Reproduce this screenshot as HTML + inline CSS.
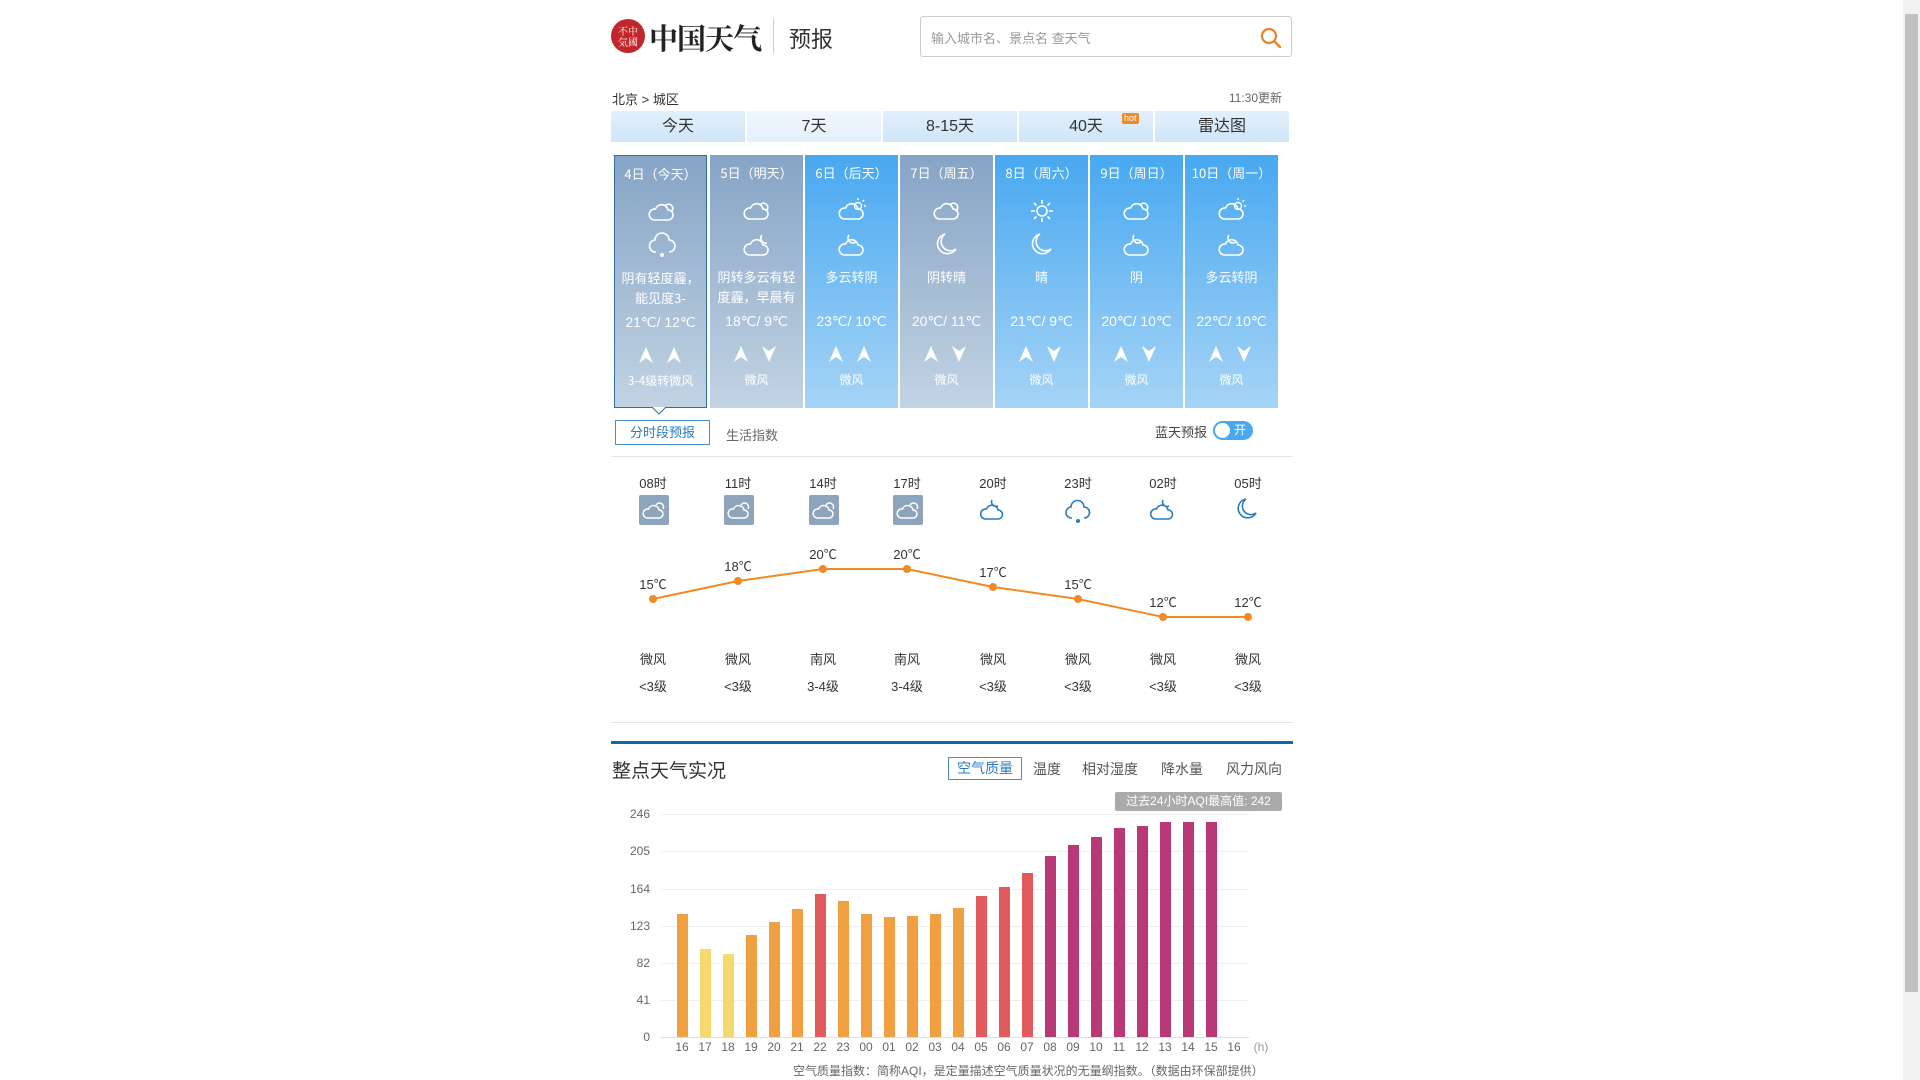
<!DOCTYPE html>
<html><head><meta charset="utf-8"><style>
*{margin:0;padding:0;box-sizing:border-box}
body{width:1920px;height:1080px;background:#fff;font-family:"Liberation Sans","Noto Sans CJK SC",sans-serif;color:#333;position:relative;overflow:hidden}
.a{position:absolute}
.tab{position:absolute;top:111px;height:31px;width:134px;background:linear-gradient(#e3f0fc,#cfe5f8);text-align:center;line-height:31px;font-size:16px;color:#333}
.card{position:absolute;top:155px;height:253px;width:93px;color:#fff;text-align:center;font-size:13px;font-family:"Noto Sans CJK SC","Liberation Sans",sans-serif}
.g{background:linear-gradient(#86a4c6,#c2d3e3)}
.b{background:linear-gradient(#48a8f0,#a6d4f6)}
.card .d{position:absolute;top:8px;width:100%;font-size:13px}
.card svg{position:absolute;left:32px}
.card .w{position:absolute;top:112px;width:100%;line-height:20px;height:40px;overflow:hidden;padding:0 5px}
.card .t{position:absolute;top:158px;width:100%;font-size:14px;font-family:"Liberation Sans",sans-serif}
.card svg.u{left:24px;top:191px}
.card svg.v{left:52px;top:191px}
.card .f{position:absolute;top:216px;width:100%;font-size:12px}
.hr{position:absolute;width:60px;margin-left:-30px;text-align:center;font-size:13px}
.yl{position:absolute;right:1270px;font-size:12px;color:#666;text-align:right}
.grid{position:absolute;left:661px;width:588px;height:1px;background:#eee}
</style></head><body>
<div class="a" style="left:611px;top:19px;width:34px;height:34px;border-radius:50%;background:#c0262a;color:#fff;font-size:10px;line-height:11px;text-align:center;padding-top:6px;font-family:'Noto Serif CJK SC',serif">不中<br>気國</div>
<div class="a" style="left:649px;top:17px;font-size:29px;font-weight:bold;font-family:'Noto Serif CJK SC',serif;color:#222;letter-spacing:-1px">中国天气</div>
<div class="a" style="left:773px;top:18px;width:1px;height:36px;background:#ccc"></div>
<div class="a" style="left:789px;top:22px;font-size:22px;color:#333">预报</div>
<div class="a" style="left:920px;top:16px;width:372px;height:41px;border:1px solid #ccc;border-radius:3px"></div>
<div class="a" style="left:931px;top:28px;font-size:13px;color:#999">输入城市名、景点名 查天气</div>
<svg class="a" style="left:1259px;top:26px" width="24" height="24" viewBox="0 0 24 24"><circle cx="10" cy="10" r="7" fill="none" stroke="#e8822a" stroke-width="2.2"/><path d="M15 15l6 6" stroke="#e8822a" stroke-width="2.4" stroke-linecap="round"/></svg>
<div class="a" style="left:612px;top:89px;font-size:13px">北京 &gt; 城区</div>
<div class="a" style="left:1200px;top:89px;width:82px;text-align:right;font-size:12px;color:#666">11:30更新</div>
<div class="tab" style="left:611px">今天</div>
<div class="tab" style="left:747px;background:linear-gradient(#f0f7fd,#e3f0fb)">7天</div>
<div class="tab" style="left:883px">8-15天</div>
<div class="tab" style="left:1019px">40天</div>
<div class="a" style="left:1122px;top:113px;background:#f08a24;color:#fff;font-size:9px;padding:0 2px;line-height:11px;border-radius:2px">hot</div>
<div class="tab" style="left:1155px">雷达图</div>

<div class="card g" style="left:614px;border:1px solid #2f6fa6"><div class="d">4日（今天）</div>
<svg style="top:44px" width="30" height="24" viewBox="0 0 30 24"><path d="M7 20h14a5 5 0 0 0 0-10 6.5 6.5 0 0 0-12.5-1A5.5 5.5 0 0 0 7 20z" fill="none" stroke="#fff" stroke-width="1.6"/><path d="M18 6a4 4 0 0 1 7 5" fill="none" stroke="#fff" stroke-width="1.6"/></svg>
<svg style="top:76px" width="30" height="28" viewBox="0 0 30 28"><path d="M9 20a6 6 0 0 1-1-12 7 7 0 0 1 14 0 6 6 0 0 1 0 12" fill="none" stroke="#fff" stroke-width="1.6"/><circle cx="15" cy="23" r="2" fill="#fff"/></svg>
<div class="w">阴有轻度霾，能见度3-</div><div class="t">21℃/ 12℃</div>
<svg class="u" width="14" height="16" viewBox="0 0 14 16"><path d="M7 0L14 16 7 11 0 16z" fill="#fff"/></svg><svg class="v" width="14" height="16" viewBox="0 0 14 16"><path d="M7 0L14 16 7 11 0 16z" fill="#fff"/></svg>
<div class="f">3-4级转微风</div></div>
<div class="card g" style="left:710px"><div class="d">5日（明天）</div>
<svg style="top:44px" width="30" height="24" viewBox="0 0 30 24"><path d="M7 20h14a5 5 0 0 0 0-10 6.5 6.5 0 0 0-12.5-1A5.5 5.5 0 0 0 7 20z" fill="none" stroke="#fff" stroke-width="1.6"/><path d="M18 6a4 4 0 0 1 7 5" fill="none" stroke="#fff" stroke-width="1.6"/></svg>
<svg style="top:76px" width="30" height="28" viewBox="0 0 30 28"><path d="M7 24h14a5 5 0 0 0 0-10 6.5 6.5 0 0 0-12.5-1A5.5 5.5 0 0 0 7 24z" fill="none" stroke="#fff" stroke-width="1.6"/><path d="M20 4a5 5 0 0 0 5 8" fill="none" stroke="#fff" stroke-width="1.6"/></svg>
<div class="w">阴转多云有轻度霾，早晨有</div><div class="t">18℃/ 9℃</div>
<svg class="u" width="14" height="16" viewBox="0 0 14 16"><path d="M7 0L14 16 7 11 0 16z" fill="#fff"/></svg><svg class="v" width="14" height="16" viewBox="0 0 14 16"><path d="M7 16L14 0 7 5 0 0z" fill="#fff"/></svg>
<div class="f">微风</div></div>
<div class="card b" style="left:805px"><div class="d">6日（后天）</div>
<svg style="top:42px" width="30" height="26" viewBox="0 0 30 26"><path d="M7 22h14a5 5 0 0 0 0-10 6.5 6.5 0 0 0-12.5-1A5.5 5.5 0 0 0 7 22z" fill="none" stroke="#fff" stroke-width="1.6"/><circle cx="21" cy="9" r="3.5" fill="none" stroke="#fff" stroke-width="1.4"/><path d="M21 1v2M27 3l-1.5 1.5M29 9h-2" stroke="#fff" stroke-width="1.4"/></svg>
<svg style="top:76px" width="30" height="28" viewBox="0 0 30 28"><path d="M7 24h14a5 5 0 0 0 0-10 6.5 6.5 0 0 0-12.5-1A5.5 5.5 0 0 0 7 24z" fill="none" stroke="#fff" stroke-width="1.6"/><path d="M12 4a5 5 0 0 0 7 7" fill="none" stroke="#fff" stroke-width="1.6"/></svg>
<div class="w">多云转阴</div><div class="t">23℃/ 10℃</div>
<svg class="u" width="14" height="16" viewBox="0 0 14 16"><path d="M7 0L14 16 7 11 0 16z" fill="#fff"/></svg><svg class="v" width="14" height="16" viewBox="0 0 14 16"><path d="M7 0L14 16 7 11 0 16z" fill="#fff"/></svg>
<div class="f">微风</div></div>
<div class="card g" style="left:900px"><div class="d">7日（周五）</div>
<svg style="top:44px" width="30" height="24" viewBox="0 0 30 24"><path d="M7 20h14a5 5 0 0 0 0-10 6.5 6.5 0 0 0-12.5-1A5.5 5.5 0 0 0 7 20z" fill="none" stroke="#fff" stroke-width="1.6"/><path d="M18 6a4 4 0 0 1 7 5" fill="none" stroke="#fff" stroke-width="1.6"/></svg>
<svg style="top:76px" width="30" height="28" viewBox="0 0 30 28"><path d="M13 3a10 10 0 1 0 11 15A9 9 0 0 1 13 3z" fill="none" stroke="#fff" stroke-width="1.6"/></svg>
<div class="w">阴转晴</div><div class="t">20℃/ 11℃</div>
<svg class="u" width="14" height="16" viewBox="0 0 14 16"><path d="M7 0L14 16 7 11 0 16z" fill="#fff"/></svg><svg class="v" width="14" height="16" viewBox="0 0 14 16"><path d="M7 16L14 0 7 5 0 0z" fill="#fff"/></svg>
<div class="f">微风</div></div>
<div class="card b" style="left:995px"><div class="d">8日（周六）</div>
<svg style="top:42px" width="30" height="28" viewBox="0 0 30 28"><circle cx="15" cy="14" r="5" fill="none" stroke="#fff" stroke-width="1.6"/><path d="M15 3v4M15 21v4M4 14h4M22 14h4M7 6l2.5 2.5M23 6l-2.5 2.5M7 22l2.5-2.5M23 22l-2.5-2.5" stroke="#fff" stroke-width="1.6"/></svg>
<svg style="top:76px" width="30" height="28" viewBox="0 0 30 28"><path d="M13 3a10 10 0 1 0 11 15A9 9 0 0 1 13 3z" fill="none" stroke="#fff" stroke-width="1.6"/></svg>
<div class="w">晴</div><div class="t">21℃/ 9℃</div>
<svg class="u" width="14" height="16" viewBox="0 0 14 16"><path d="M7 0L14 16 7 11 0 16z" fill="#fff"/></svg><svg class="v" width="14" height="16" viewBox="0 0 14 16"><path d="M7 16L14 0 7 5 0 0z" fill="#fff"/></svg>
<div class="f">微风</div></div>
<div class="card b" style="left:1090px"><div class="d">9日（周日）</div>
<svg style="top:44px" width="30" height="24" viewBox="0 0 30 24"><path d="M7 20h14a5 5 0 0 0 0-10 6.5 6.5 0 0 0-12.5-1A5.5 5.5 0 0 0 7 20z" fill="none" stroke="#fff" stroke-width="1.6"/><path d="M18 6a4 4 0 0 1 7 5" fill="none" stroke="#fff" stroke-width="1.6"/></svg>
<svg style="top:76px" width="30" height="28" viewBox="0 0 30 28"><path d="M7 24h14a5 5 0 0 0 0-10 6.5 6.5 0 0 0-12.5-1A5.5 5.5 0 0 0 7 24z" fill="none" stroke="#fff" stroke-width="1.6"/><path d="M12 4a5 5 0 0 0 7 7" fill="none" stroke="#fff" stroke-width="1.6"/></svg>
<div class="w">阴</div><div class="t">20℃/ 10℃</div>
<svg class="u" width="14" height="16" viewBox="0 0 14 16"><path d="M7 0L14 16 7 11 0 16z" fill="#fff"/></svg><svg class="v" width="14" height="16" viewBox="0 0 14 16"><path d="M7 16L14 0 7 5 0 0z" fill="#fff"/></svg>
<div class="f">微风</div></div>
<div class="card b" style="left:1185px"><div class="d">10日（周一）</div>
<svg style="top:42px" width="30" height="26" viewBox="0 0 30 26"><path d="M7 22h14a5 5 0 0 0 0-10 6.5 6.5 0 0 0-12.5-1A5.5 5.5 0 0 0 7 22z" fill="none" stroke="#fff" stroke-width="1.6"/><circle cx="21" cy="9" r="3.5" fill="none" stroke="#fff" stroke-width="1.4"/><path d="M21 1v2M27 3l-1.5 1.5M29 9h-2" stroke="#fff" stroke-width="1.4"/></svg>
<svg style="top:76px" width="30" height="28" viewBox="0 0 30 28"><path d="M7 24h14a5 5 0 0 0 0-10 6.5 6.5 0 0 0-12.5-1A5.5 5.5 0 0 0 7 24z" fill="none" stroke="#fff" stroke-width="1.6"/><path d="M12 4a5 5 0 0 0 7 7" fill="none" stroke="#fff" stroke-width="1.6"/></svg>
<div class="w">多云转阴</div><div class="t">22℃/ 10℃</div>
<svg class="u" width="14" height="16" viewBox="0 0 14 16"><path d="M7 0L14 16 7 11 0 16z" fill="#fff"/></svg><svg class="v" width="14" height="16" viewBox="0 0 14 16"><path d="M7 16L14 0 7 5 0 0z" fill="#fff"/></svg>
<div class="f">微风</div></div>
<svg class="a" style="left:652px;top:407px" width="14" height="8"><path d="M0 0l7 7 7-7" fill="#fff" stroke="#2f6fa6"/></svg>

<div class="a" style="left:615px;top:420px;width:95px;height:25px;border:1px solid #4a90c8;color:#2a7bc0;font-size:13px;text-align:center;line-height:23px">分时段预报</div>
<div class="a" style="left:726px;top:425px;font-size:13px;color:#666">生活指数</div>
<div class="a" style="left:1155px;top:422px;font-size:13px;color:#444">蓝天预报</div>
<div class="a" style="left:1213px;top:421px;width:40px;height:19px;border-radius:10px;background:#4aa8ee;color:#fff;font-size:12px;line-height:19px;padding-left:21px">开<div class="a" style="left:2px;top:2px;width:15px;height:15px;border-radius:50%;background:#fff"></div></div>
<div class="a" style="left:611px;top:456px;width:682px;height:1px;background:#e5e5e5"></div>

<div class="hr" style="left:653px;top:473px">08时</div><div class="hr" style="left:738px;top:473px">11时</div><div class="hr" style="left:823px;top:473px">14时</div><div class="hr" style="left:907px;top:473px">17时</div><div class="hr" style="left:993px;top:473px">20时</div><div class="hr" style="left:1078px;top:473px">23时</div><div class="hr" style="left:1163px;top:473px">02时</div><div class="hr" style="left:1248px;top:473px">05时</div>
<svg class="a" style="left:0;top:0" width="1920" height="1080">
<g fill="#8ea3bc"><rect x="639" y="495" width="30" height="30" rx="2"/><rect x="724" y="495" width="30" height="30" rx="2"/><rect x="809" y="495" width="30" height="30" rx="2"/><rect x="893" y="495" width="30" height="30" rx="2"/></g>
<g fill="none" stroke="#fff" stroke-width="1.5">
<path d="M647 518h12a4 4 0 0 0 0-8 5.5 5.5 0 0 0-10.5-1A4.5 4.5 0 0 0 647 518zM656 505a3.5 3.5 0 0 1 7 4"/>
<path d="M732 518h12a4 4 0 0 0 0-8 5.5 5.5 0 0 0-10.5-1A4.5 4.5 0 0 0 732 518zM741 505a3.5 3.5 0 0 1 7 4"/>
<path d="M817 518h12a4 4 0 0 0 0-8 5.5 5.5 0 0 0-10.5-1A4.5 4.5 0 0 0 817 518zM826 505a3.5 3.5 0 0 1 7 4"/>
<path d="M901 518h12a4 4 0 0 0 0-8 5.5 5.5 0 0 0-10.5-1A4.5 4.5 0 0 0 901 518zM910 505a3.5 3.5 0 0 1 7 4"/>
</g>
<g fill="none" stroke="#2a7bc0" stroke-width="1.6">
<path d="M985 519h13a4.5 4.5 0 0 0 0-9 6 6 0 0 0-11.5-1A5 5 0 0 0 985 519zM992 500a4.5 4.5 0 0 0 6 6"/>
<path d="M1072 518a5.5 5.5 0 0 1-1-11 6.5 6.5 0 0 1 13 0 5.5 5.5 0 0 1 0 11"/>
<path d="M1155 519h13a4.5 4.5 0 0 0 0-9 6 6 0 0 0-11.5-1A5 5 0 0 0 1155 519zM1163 500a4.5 4.5 0 0 0 6 6"/>
<path d="M1246 499a9.5 9.5 0 1 0 10 14A8.5 8.5 0 0 1 1246 499z"/>
</g>
<circle cx="1078" cy="521" r="2" fill="#2a7bc0"/>
<polyline points="653,599 738,581 823,569 907,569 993,587 1078,599 1163,617 1248,617" fill="none" stroke="#f08a24" stroke-width="2"/>
<g fill="#f08a24"><circle cx="653" cy="599" r="4"/><circle cx="738" cy="581" r="4"/><circle cx="823" cy="569" r="4"/><circle cx="907" cy="569" r="4"/><circle cx="993" cy="587" r="4"/><circle cx="1078" cy="599" r="4"/><circle cx="1163" cy="617" r="4"/><circle cx="1248" cy="617" r="4"/></g>
<g font-size="13" fill="#333" text-anchor="middle" font-family="Liberation Sans, Noto Sans CJK SC, sans-serif">
<text x="653" y="589">15℃</text><text x="738" y="571">18℃</text><text x="823" y="559">20℃</text><text x="907" y="559">20℃</text><text x="993" y="577">17℃</text><text x="1078" y="589">15℃</text><text x="1163" y="607">12℃</text><text x="1248" y="607">12℃</text>
<text x="653" y="664">微风</text><text x="738" y="664">微风</text><text x="823" y="664">南风</text><text x="907" y="664">南风</text><text x="993" y="664">微风</text><text x="1078" y="664">微风</text><text x="1163" y="664">微风</text><text x="1248" y="664">微风</text>
<text x="653" y="691">&lt;3级</text><text x="738" y="691">&lt;3级</text><text x="823" y="691">3-4级</text><text x="907" y="691">3-4级</text><text x="993" y="691">&lt;3级</text><text x="1078" y="691">&lt;3级</text><text x="1163" y="691">&lt;3级</text><text x="1248" y="691">&lt;3级</text>
</g>
</svg>
<div class="a" style="left:611px;top:722px;width:682px;height:1px;background:#e5e5e5"></div>
<div class="a" style="left:611px;top:741px;width:682px;height:3px;background:#0f6aa5"></div>
<div class="a" style="left:612px;top:756px;font-size:19px;color:#333">整点天气实况</div>
<div class="a" style="left:948px;top:757px;width:74px;height:23px;border:1px solid #4a90c8;color:#2a7bc0;font-size:14px;text-align:center;line-height:21px">空气质量</div>
<div class="a" style="left:1033px;top:759px;font-size:14px;color:#555">温度</div>
<div class="a" style="left:1082px;top:759px;font-size:14px;color:#555">相对湿度</div>
<div class="a" style="left:1161px;top:759px;font-size:14px;color:#555">降水量</div>
<div class="a" style="left:1226px;top:759px;font-size:14px;color:#555">风力风向</div>
<div class="a" style="left:1115px;top:792px;width:167px;height:19px;background:#aaa;border-radius:2px;color:#fff;font-size:12px;text-align:center;line-height:19px">过去24小时AQI最高值: 242</div>

<div class="grid" style="top:814px"></div><div class="grid" style="top:851px"></div><div class="grid" style="top:889px"></div><div class="grid" style="top:926px"></div><div class="grid" style="top:963px"></div><div class="grid" style="top:1000px"></div><div class="grid" style="top:1037px;background:#ddd"></div>
<div class="yl" style="top:807px">246</div><div class="yl" style="top:844px">205</div><div class="yl" style="top:882px">164</div><div class="yl" style="top:919px">123</div><div class="yl" style="top:956px">82</div><div class="yl" style="top:993px">41</div><div class="yl" style="top:1030px">0</div>
<svg class="a" style="left:0;top:0" width="1920" height="1080">
<g>
<rect x="677" y="914" width="11" height="123" fill="#f0a040"/>
<rect x="700" y="949" width="11" height="88" fill="#f5d86e"/>
<rect x="723" y="954" width="11" height="83" fill="#f5d86e"/>
<rect x="746" y="935" width="11" height="102" fill="#f0a040"/>
<rect x="769" y="922" width="11" height="115" fill="#f0a040"/>
<rect x="792" y="909" width="11" height="128" fill="#f0a040"/>
<rect x="815" y="894" width="11" height="143" fill="#e05a5e"/>
<rect x="838" y="901" width="11" height="136" fill="#f0a040"/>
<rect x="861" y="914" width="11" height="123" fill="#f0a040"/>
<rect x="884" y="917" width="11" height="120" fill="#f0a040"/>
<rect x="907" y="916" width="11" height="121" fill="#f0a040"/>
<rect x="930" y="914" width="11" height="123" fill="#f0a040"/>
<rect x="953" y="908" width="11" height="129" fill="#f0a040"/>
<rect x="976" y="896" width="11" height="141" fill="#e05a5e"/>
<rect x="999" y="887" width="11" height="150" fill="#e05a5e"/>
<rect x="1022" y="873" width="11" height="164" fill="#e05a5e"/>
<rect x="1045" y="856" width="11" height="181" fill="#b83878"/>
<rect x="1068" y="845" width="11" height="192" fill="#b83878"/>
<rect x="1091" y="837" width="11" height="200" fill="#b83878"/>
<rect x="1114" y="828" width="11" height="209" fill="#b83878"/>
<rect x="1137" y="826" width="11" height="211" fill="#b83878"/>
<rect x="1160" y="822" width="11" height="215" fill="#b83878"/>
<rect x="1183" y="822" width="11" height="215" fill="#b83878"/>
<rect x="1206" y="822" width="11" height="215" fill="#b83878"/>
</g>
<g font-size="12" fill="#666" text-anchor="middle" font-family="Liberation Sans, sans-serif">
<text x="682" y="1051">16</text><text x="705" y="1051">17</text><text x="728" y="1051">18</text><text x="751" y="1051">19</text><text x="774" y="1051">20</text><text x="797" y="1051">21</text><text x="820" y="1051">22</text><text x="843" y="1051">23</text><text x="866" y="1051">00</text><text x="889" y="1051">01</text><text x="912" y="1051">02</text><text x="935" y="1051">03</text><text x="958" y="1051">04</text><text x="981" y="1051">05</text><text x="1004" y="1051">06</text><text x="1027" y="1051">07</text><text x="1050" y="1051">08</text><text x="1073" y="1051">09</text><text x="1096" y="1051">10</text><text x="1119" y="1051">11</text><text x="1142" y="1051">12</text><text x="1165" y="1051">13</text><text x="1188" y="1051">14</text><text x="1211" y="1051">15</text><text x="1234" y="1051">16</text><text x="1261" y="1051" fill="#999">(h)</text>
</g>
</svg>
<div class="a" style="left:793px;top:1062px;font-size:12px;color:#666">空气质量指数：简称AQI，是定量描述空气质量状况的无量纲指数。（数据由环保部提供）</div>
<div class="a" style="left:1903px;top:0;width:17px;height:1080px;background:#f1f1f1"></div>
<div class="a" style="left:1905px;top:14px;width:13px;height:978px;background:#c1c1c1"></div>
</body></html>
